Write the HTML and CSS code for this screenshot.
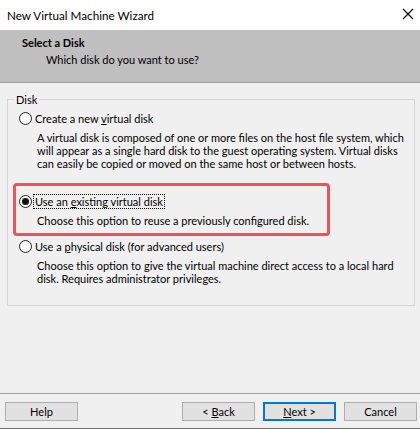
FILE: index.html
```html
<!DOCTYPE html>
<html>
<head>
<meta charset="utf-8">
<link rel="stylesheet" href="styles.css">
</head>
<body>
<div class="window">
  <div class="titlebar">
    <span class="title">New Virtual Machine Wizard</span>
    <svg class="close" width="12" height="12" viewBox="0 0 12 12"><path d="M1 1 L11 11 M11 1 L1 11" stroke="#000" stroke-width="1.1" fill="none"/></svg>
  </div>
  <div class="header">
    <div class="h-title">Select a Disk</div>
    <div class="h-sub">Which disk do you want to use?</div>
  </div>
  <div class="body">
    <fieldset class="group">
      <legend>Disk</legend>
      <div class="option"><span class="radio"></span><span class="label">Create a new <u>v</u>irtual disk</span></div>
      <p class="desc">A virtual disk is composed of one or more files on the host file system, which<br>will appear as a single hard disk to the guest operating system. Virtual disks<br>can easily be copied or moved on the same host or between hosts.</p>
      <div class="highlight">
        <div class="option"><span class="radio checked"></span><span class="label focus">Use an <u>e</u>xisting virtual disk</span></div>
        <p class="desc">Choose this option to reuse a previously configured disk.</p>
      </div>
      <div class="option opt3"><span class="radio"></span><span class="label">Use a <u>p</u>hysical disk (for advanced users)</span></div>
      <p class="desc">Choose this option to give the virtual machine direct access to a local hard<br>disk. Requires administrator privileges.</p>
    </fieldset>
  </div>
  <div class="footer">
    <button class="btn">Help</button>
    <button class="btn back">&lt; <u>B</u>ack</button>
    <button class="btn default"><u>N</u>ext &gt;</button>
    <button class="btn">Cancel</button>
  </div>
</div>
</body>
</html>
```

FILE: styles.css
```css
* { box-sizing: border-box; }
html, body { margin: 0; padding: 0; }
body {
  width: 420px;
  height: 429px;
  overflow: hidden;
  font-family: Lato, "Noto Sans", sans-serif;
  font-size: 11px;
  color: #000;
  background: #f0f0f0;
}
.window {
  display: flex;
  flex-direction: column;
  height: 429px;
}
.titlebar {
  height: 30px;
  background: #fff;
  display: flex;
  align-items: center;
  justify-content: space-between;
  padding: 0 6px 0 7px;
  flex: none;
}
.title { font-size: 11.7px; line-height: 16px; }
.close { display: block; margin-top: -2px; }
.header {
  height: 53px;
  flex: none;
  background: #bfbfbf;
  border-bottom: 1px solid #a3a3a3;
  padding: 5px 0 0 22px;
}
.h-title { font-weight: bold; line-height: 16px; }
.h-sub { line-height: 16px; margin-top: 1px; padding-left: 24px; }
.body {
  flex: 1;
  padding: 10px 6px 0 7px;
}
.group {
  margin: 0;
  border: 1px solid #d5d5d5;
  padding: 5px 10px 20px 11px;
}
.group legend {
  line-height: 13px;
  padding: 0 2px;
  margin-left: -5px;
}
.option {
  display: flex;
  align-items: center;
  height: 14px;
}
.radio {
  width: 13px;
  height: 13px;
  border: 1px solid #222;
  border-radius: 50%;
  background: #fff;
  flex: none;
  display: flex;
  align-items: center;
  justify-content: center;
}
.radio.checked::after {
  content: "";
  width: 7px;
  height: 7px;
  border-radius: 50%;
  background: #111;
}
.label {
  margin-left: 1px;
  padding: 0 1px;
  border: 1px solid transparent;
  line-height: 13px;
  white-space: nowrap;
}
.label.focus { border: 1px dotted #000; }
.desc {
  margin: 6px 0 0 18px;
  line-height: 13px;
  white-space: nowrap;
}
.highlight {
  margin: 13px 0 0 -6px;
  width: 317px;
  border: 3px solid #f4505a;
  border-radius: 4px;
  padding: 8px 0 6px 3px;
}
.opt3 { margin-top: 3px; }
.footer {
  height: 36px;
  flex: none;
  border-top: 1px solid #a0a0a0;
  border-bottom: 1px solid #6d6d6d;
  display: flex;
  align-items: flex-start;
  gap: 8px;
  padding: 8px 3px 0 5px;
}
.btn {
  width: 73px;
  height: 19px;
  background: #e1e1e1;
  border: 1px solid #adadad;
  font-family: inherit;
  font-size: 11px;
  line-height: 15px;
  padding: 0;
  color: #000;
}
.btn.back { margin-left: auto; }
.btn.default { border: 2px solid #0078d7; }
```
